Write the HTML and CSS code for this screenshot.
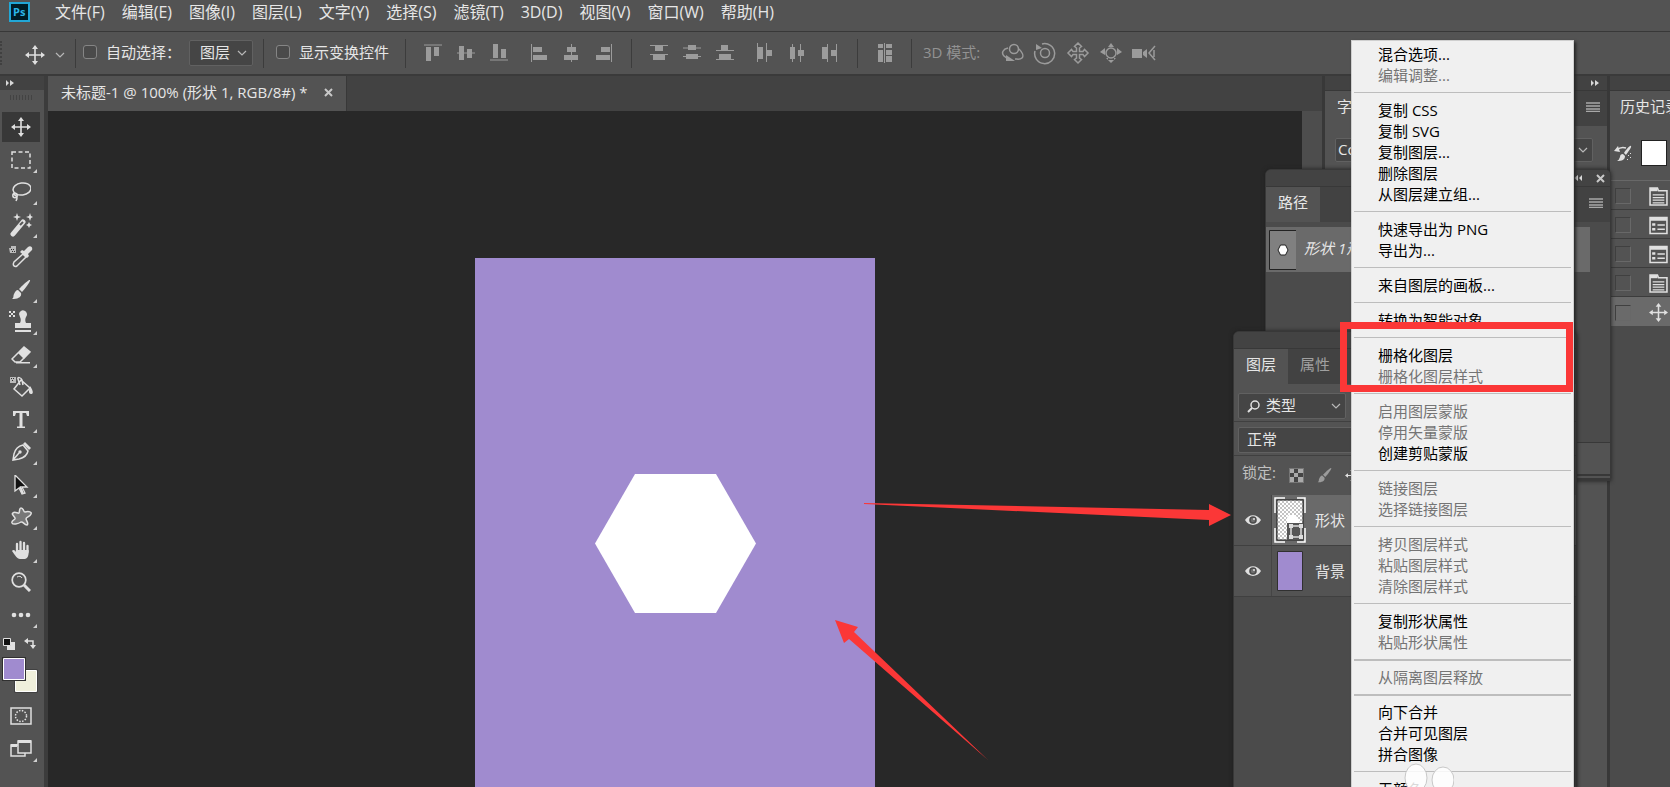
FILE: index.html
```html
<!DOCTYPE html>
<html lang="zh-CN">
<head>
<meta charset="utf-8">
<title>未标题-1</title>
<link rel="stylesheet" href="styles.css">
</head>
<body>
<svg class="defs" aria-hidden="true">
  <defs>
    <symbol id="i-move" viewBox="0 0 20 20"><path d="M10 3v14M3 10h14" stroke="currentColor" stroke-width="1.6"/><path d="M10 0l3 4H7zM10 20l3-4H7zM0 10l4-3v6zM20 10l-4-3v6z" fill="currentColor"/></symbol>
    <symbol id="i-chev" viewBox="0 0 10 6"><path d="M1 1l4 4 4-4" fill="none" stroke="currentColor" stroke-width="1.2"/></symbol>
    <symbol id="i-brush" viewBox="0 0 20 20"><path d="M19 0c1 1-5 9-8 12l-3-3C11 6 18-1 19 0zM7 10l3 3c1 4-3 6-9 6 2-1 1-3 2-5s2-4 4-4z" fill="currentColor"/></symbol>
    <symbol id="i-lines" viewBox="0 0 14 10"><path d="M0 1h14M0 4h14M0 7h14M0 9.500h14" stroke="currentColor" stroke-width="1.300"/></symbol>
    <symbol id="i-dbl" viewBox="0 0 8 6"><path d="M0 0l3 3-3 3zM4 0l4 3-4 3z" fill="currentColor"/></symbol>
    <symbol id="i-eye" viewBox="0 0 16 10"><path d="M0 5c4-6.500 12-6.500 16 0-4 6.500-12 6.500-16 0z" fill="#e0e0e0"/><circle cx="8" cy="5" r="3.800" fill="#4b4b4b"/><circle cx="8" cy="5" r="2.200" fill="#6f6f6f"/><circle cx="9" cy="4" r="1" fill="#e0e0e0"/></symbol>
    <symbol id="i-page" viewBox="0 0 18 18"><path d="M1 17V1h7l1 2.500h8V17z" fill="none" stroke="currentColor" stroke-width="1.500"/><path d="M1 1h7v3H1z" fill="currentColor"/><path d="M3.500 7.500h11M3.500 10h11M3.500 12.500h11M3.500 15h11" stroke="currentColor" stroke-width="1.200"/></symbol>
    <symbol id="i-list" viewBox="0 0 18 18"><path d="M1 1.500h16v15H1z" fill="none" stroke="currentColor" stroke-width="1.500"/><path d="M1 1.500h16v3H1z" fill="currentColor"/><path d="M3 8h3M3 12.500h3" stroke="currentColor" stroke-width="2.500"/><path d="M8 8.500h7M8 12.500h7" stroke="currentColor" stroke-width="1.500"/></symbol>
    <pattern id="checker" width="4" height="4" patternUnits="userSpaceOnUse"><path d="M0 0h4v4H0z" fill="#fff"/><path d="M0 0h2v2H0zM2 2h2v2H2z" fill="#c4c4c4"/></pattern>
  </defs>
</svg>

<div class="app">
  <header class="menubar">
    <svg class="logo" viewBox="0 0 21 20" role="img" aria-label="Ps"><rect x="1" y="1" width="19" height="18" fill="#001d26" stroke="#22a7d6" stroke-width="2"/><text x="4" y="14" class="logo-text">Ps</text></svg>
    <nav class="menus">
      <button>文件(F)</button><button>编辑(E)</button><button>图像(I)</button><button>图层(L)</button><button>文字(Y)</button><button>选择(S)</button><button>滤镜(T)</button><button>3D(D)</button><button>视图(V)</button><button>窗口(W)</button><button>帮助(H)</button>
    </nav>
  </header>

  <div class="options">
    <span class="grip"></span>
    <button class="current-tool" aria-label="移动工具"><svg class="ic20"><use href="#i-move"/></svg><svg class="chev"><use href="#i-chev"/></svg></button>
    <div class="opt auto">
      <label class="check"><input type="checkbox">自动选择：</label>
      <div class="select"><select aria-label="自动选择"><option>图层</option></select><svg class="chev"><use href="#i-chev"/></svg></div>
    </div>
    <div class="opt transform"><label class="check"><input type="checkbox">显示变换控件</label></div>
    <div class="opt icons">
      <div class="set">
        <button aria-label="顶对齐"><svg class="ic20"><path d="M1 2h18" stroke="#9b9b9b"/><path d="M3 4h5v14H3zM11 4h5v9h-5z"/></svg></button>
        <button aria-label="垂直居中对齐"><svg class="ic20"><path d="M1 10h18" stroke="#9b9b9b"/><path d="M3 3h5v14H3zM11 6h5v9h-5z"/></svg></button>
        <button aria-label="底对齐"><svg class="ic20"><path d="M1 17h18" stroke="#9b9b9b"/><path d="M4 1h5v14H4zM12 6h5v9h-5z"/></svg></button>
      </div>
      <div class="set">
        <button aria-label="左对齐"><svg class="ic20"><path d="M3.500 1v18" stroke="#9b9b9b"/><path d="M5 4h9v5H5zM5 12h14v5H5z"/></svg></button>
        <button aria-label="水平居中对齐"><svg class="ic20"><path d="M10.500 1v18" stroke="#9b9b9b"/><path d="M6 4h9v5H6zM3 12h14v5H3z"/></svg></button>
        <button aria-label="右对齐"><svg class="ic20"><path d="M17.500 1v18" stroke="#9b9b9b"/><path d="M7 4h9v5H7zM2 12h14v5H2z"/></svg></button>
      </div>
    </div>
    <div class="opt icons">
      <div class="set">
        <button aria-label="按顶分布"><svg class="ic20"><path d="M1 2.500h18M1 11.500h18" stroke="#9b9b9b"/><path d="M6 3h8v5H6zM4 12h12v5H4z"/></svg></button>
        <button aria-label="垂直居中分布"><svg class="ic20"><path d="M1 5h18M1 13.500h18" stroke="#9b9b9b"/><path d="M6 2h8v5H6zM4 11h12v5H4z"/></svg></button>
        <button aria-label="按底分布"><svg class="ic20"><path d="M1 7.500h18M1 16.500h18" stroke="#9b9b9b"/><path d="M6 2h7v5H6zM4 11h12v5H4z"/></svg></button>
      </div>
      <div class="set">
        <button aria-label="按左分布"><svg class="ic20"><path d="M3.500 0v19M12.500 0v19" stroke="#9b9b9b"/><path d="M4 4h5v12H4zM13 7h5v6h-5z"/></svg></button>
        <button aria-label="水平居中分布"><svg class="ic20"><path d="M5.500 1v18M13.500 1v18" stroke="#9b9b9b"/><path d="M3 4h5v12H3zM11 7h6v6h-6z"/></svg></button>
        <button aria-label="按右分布"><svg class="ic20"><path d="M7.500 1v18M16.500 1v18" stroke="#9b9b9b"/><path d="M2 4h5v12H2zM11 7h5v6h-5z"/></svg></button>
      </div>
    </div>
    <div class="opt single"><button aria-label="自动对齐图层"><svg class="ic20"><path d="M3 1h5v4H3zM11 1h6v4h-6zM3 7h5v12H3zM11 7h6v5h-6zM11 13h6v6h-6z"/><path d="M9.500 0v20" stroke="#9b9b9b"/></svg></button></div>
    <div class="opt three-d"><span class="mode">3D 模式:</span>
      <div class="set">
        <button aria-label="旋转"><svg class="ic24"><g fill="none" stroke="#9b9b9b" stroke-width="1.500"><circle cx="14" cy="8" r="4.500"/><path d="M8 7C3 8 1 12 4 15c2 2 4 3 6 3M19 8c3 3 5 7 3 9-2 2-5 1-7 1"/></g><path d="M6 14v6h9z"/></svg></button>
        <button aria-label="滚动"><svg class="ic24"><g fill="none" stroke="#9b9b9b" stroke-width="1.500"><circle cx="12" cy="12" r="4.500"/><path d="M9 3a10 10 0 1 1-7 7"/></g><path d="M3 9l6-2-6-4z"/></svg></button>
        <button aria-label="拖动"><svg class="ic24"><path d="M12 2l3.500 3.500-2 1.500v3.500H17l1.500-2L22 12l-3.500 3.500-1.500-2h-3.500V17l2 1.500L12 22l-3.500-3.500 2-1.500v-3.500H7l-1.500 2L2 12l3.500-3.500 1.500 2h3.500V7l-2-1.500z" fill="none" stroke="#9b9b9b" stroke-width="1.500"/></svg></button>
        <button aria-label="滑动"><svg class="ic24"><circle cx="12" cy="12" r="5" fill="none" stroke="#9b9b9b" stroke-width="1.500"/><path d="M12 2l3 4h-6zM12 22l5-5H7zM1 11l5-4v7zM23 11l-5-4v7zM9 17h6v2H9z"/></svg></button>
        <button aria-label="变焦"><svg class="ic24"><path d="M0 8h10v9H0zM11 11l4-3v9l-4-3z"/><path d="M23 5l-6 7 6 7M22 9v7" fill="none" stroke="#9b9b9b" stroke-width="1.500"/></svg></button>
      </div>
    </div>
  </div>

  <main class="workspace">
    <aside class="tools">
      <div class="strip"><svg class="dbl"><use href="#i-dbl"/></svg></div>
      <div class="tool-grip"></div>
      <div class="tool-list">
        <button class="on" aria-label="移动"><svg class="ic20"><use href="#i-move"/></svg></button>
        <button class="more" aria-label="选框"><svg class="ic20"><rect x="1" y="2" width="18" height="16" fill="none" stroke="#e0e0e0" stroke-width="1.500" stroke-dasharray="4 2.500"/></svg></button>
        <button class="more" aria-label="套索"><svg class="ic20"><g fill="none" stroke="#e0e0e0" stroke-width="1.500"><ellipse cx="11" cy="7" rx="9" ry="6" transform="rotate(-8 11 7)"/><circle cx="4" cy="13.500" r="2.200"/><path d="M2 12c4 2 5 3 3 7"/></g></svg></button>
        <button class="more" aria-label="魔棒"><svg class="ic24"><path d="M4 21L14 9" stroke="#e0e0e0" stroke-width="5" stroke-linecap="round"/><path d="M11 12l3-3" stroke="#555" stroke-width="2"/><path d="M8 0l1 3 3 1-3 1-1 3-1-3-3-1 3-1zM21 0l1 3 2 1-2 1-1 3-1-3-3-1 3-1zM20 9l1 2 2 1-2 1-1 2-1-2-2-1 2-1z" fill="#e0e0e0"/></svg></button>
        <button aria-label="吸管"><svg class="ic24"><path d="M0 3h2V1h5v7H1z" fill="#bbb"/><path d="M2 4h1v1H2zM4 4h1v1H4zM3 6h1v1H3zM5 6h1v1H5z" fill="#333"/><path d="M14 9l3 3-9 9c-2 1-5 0-3-4z" fill="none" stroke="#e0e0e0" stroke-width="1.500"/><path d="M11 7l2-2 2 1 4-4c3-2 5 1 4 3l-4 4 1 2-2 2z" fill="#e0e0e0"/></svg></button>
        <button class="more" aria-label="画笔"><svg class="ic20"><use href="#i-brush"/></svg></button>
        <button class="more" aria-label="图章"><svg class="ic24"><path d="M0 1h2v2H0zM4 1h2v2H4zM2 3h2v2H2zM0 5h2v2H0zM4 5h2v2H4zM10 4a4 4 0 1 1 7 3c-1 2-1 4 0 6h5v5H6v-5h5c1-2 1-4 0-6zM6 20h16v2H6z" fill="#e0e0e0"/></svg></button>
        <button class="more" aria-label="橡皮擦"><svg class="ic20"><path d="M1 14L13 2l6 5-10 10H4z" fill="none" stroke="#e0e0e0" stroke-width="1.500"/><path d="M7 8l6-6 6 5-6 7zM5 17h14v1.500H5z" fill="#e0e0e0"/></svg></button>
        <button aria-label="油漆桶"><svg class="ic24"><path d="M1 2h6v6H1z" fill="#bbb"/><path d="M2 3h1v1H2zM4 3h1v1H4zM3 5h1v1H3z" fill="#333"/><path d="M12 5l9 8-8 8-8-7zM11 10L9 4c-1-2 3-2 4 1l1 5" fill="none" stroke="#e0e0e0" stroke-width="1.500"/><path d="M21 11c3 4 4 8 1 8s-2-4-1-8z" fill="#e0e0e0"/></svg></button>
        <button class="more" aria-label="文字"><svg class="ic20"><path d="M2 1h16v5h-2l-1-3h-3.500v13.500H14V18H6v-1.500h2.500V3H5L4 6H2z" fill="#e0e0e0"/></svg></button>
        <button class="more" aria-label="钢笔"><svg class="ic20"><path d="M12 3l5 6c-1 5-5 7-9 8l-6 1 1-6c1-4 4-8 9-9zM2 18l6-7" fill="none" stroke="#e0e0e0" stroke-width="1.500"/><circle cx="9" cy="10" r="1.700" fill="#e0e0e0"/><path d="M12 2l2-2 6 6-2 2z" fill="#e0e0e0"/></svg></button>
        <button class="more" aria-label="路径选择"><svg class="ic20"><path d="M4 0v16l4-3 3 6 3-1-3-6h5z" fill="#111" stroke="#e0e0e0" stroke-width="1.300"/><path d="M8 12l3 7 2-1-3-7z" fill="#e0e0e0"/></svg></button>
        <button class="more" aria-label="形状"><svg class="ic24"><path d="M12 3c3 0 2 4 4 4 4-1 7 0 6 2-1 3-5 3-5 5 1 3 3 5 1 6-3 0-4-4-6-3-3 2-8 3-9 1-1-3 4-3 3-5C5 11 2 9 4 8c2-2 5 1 6 0 1-2 0-5 2-5z" fill="#777" stroke="#e0e0e0" stroke-width="1.500"/></svg></button>
        <button class="more" aria-label="抓手"><svg class="ic20"><path d="M6 12V4M9.500 11V2M13 11V3M16.500 12V6" stroke="#e0e0e0" stroke-width="2.300" stroke-linecap="round"/><path d="M5 10h12.600c.5 5-1 9-4 9H9c-3 0-5-4-8-8 1-2 3-1 4 1z" fill="#e0e0e0"/></svg></button>
        <button aria-label="缩放"><svg class="ic20"><circle cx="8" cy="8" r="6.800" fill="none" stroke="#e0e0e0" stroke-width="1.700"/><path d="M6 5c2-1 4-1 5 1" fill="none" stroke="#e0e0e0"/><path d="M13 13l6 6" stroke="#e0e0e0" stroke-width="3"/></svg></button>
        <button class="more" aria-label="更多"><svg class="ic20"><circle cx="3" cy="10" r="2.300" fill="#e0e0e0"/><circle cx="10" cy="10" r="2.300" fill="#e0e0e0"/><circle cx="17" cy="10" r="2.300" fill="#e0e0e0"/></svg></button>
      </div>
      <svg class="colors" viewBox="0 0 40 58" role="img" aria-label="前景色和背景色">
        <path d="M7 6h8v8H7z" fill="#e0e0e0"/><path d="M3.500 2.500h7v7h-7z" fill="#111" stroke="#e0e0e0"/>
        <path d="M27 5h6v6" fill="none" stroke="#e0e0e0" stroke-width="1.500"/><path d="M24 5l4-3v6zM33 13l-3-4h6z" fill="#e0e0e0"/>
        <path d="M14.500 33.500h23v23h-23z" fill="#303030"/><path d="M15.500 34.500h21v21h-21z" fill="#f0f0dc" stroke="#fff"/>
        <path d="M2 21h24v24H2z" fill="#303030"/><path d="M3.500 22.500h21v21h-21z" fill="#a08bcf" stroke="#fff"/>
      </svg>
      <button aria-label="快速蒙版"><svg class="ic24"><path d="M2 4h20v16H2z" fill="none" stroke="#e0e0e0" stroke-width="1.500"/><circle cx="12" cy="12" r="5.500" fill="none" stroke="#e0e0e0" stroke-width="1.500" stroke-dasharray="1.500 1.400"/></svg></button>
      <button class="more" aria-label="屏幕模式"><svg class="ic24"><path d="M9 8H2v11h14v-3M9 4h13v12H9z" fill="none" stroke="#e0e0e0" stroke-width="1.500"/><path d="M9 3h13v3H9zM2 7h6v3H2z" fill="#e0e0e0"/></svg></button>
    </aside>

    <section class="document">
      <div class="doc-tabs"><div class="doc-tab"><span>未标题-1 @ 100% (形状 1, RGB/8#) *</span><button aria-label="关闭"><svg class="x"><path d="M1 1l7 7M8 1L1 8"/></svg></button></div></div>
      <div class="stage">
        <div class="canvas"><svg class="artboard" viewBox="0 0 400 529" preserveAspectRatio="xMinYMin slice"><path d="M120 285.500L160 216h81l40 69.500-40 69.500h-81z" fill="#fff"/></svg></div>
        <div class="scrollbar"></div>
      </div>
    </section>

    <aside class="dock char">
      <div class="strip end"><svg class="dbl"><use href="#i-dbl"/></svg></div>
      <div class="tabs"><span class="tab">字符</span><svg class="lines"><use href="#i-lines"/></svg></div>
      <div class="char-body"><div class="select"><select aria-label="字体"><option>Courier</option></select><svg class="chev"><use href="#i-chev"/></svg></div></div>
    </aside>
    <aside class="dock history">
      <div class="strip"></div>
      <div class="tabs"><span class="tab">历史记录</span></div>
      <div class="snapshot"><svg class="hist-brush" viewBox="0 0 18 18"><path d="M17 2c1 1-3 6-5 9l-2-2c2-3 6-8 7-7zM9 10l2 2c0 4-3 5-8 5 2-1 2-2 3-4 0-2 1-3 3-3z" fill="currentColor"/><path d="M3 6c3-3 6-3 9-2" fill="none" stroke="currentColor" stroke-width="1.500"/><path d="M0 7l4-5 2 6zM14 11h1v1h-1zM16 9h1v1h-1zM16 13h1v1h-1zM13 15h1v1h-1z" fill="currentColor"/></svg><span class="snap-thumb"></span></div>
      <ul class="steps">
        <li><span class="box"></span><svg><use href="#i-page"/></svg></li>
        <li><span class="box"></span><svg><use href="#i-list"/></svg></li>
        <li><span class="box"></span><svg><use href="#i-list"/></svg></li>
        <li><span class="box"></span><svg><use href="#i-page"/></svg></li>
        <li class="on"><span class="box"></span><svg><use href="#i-move"/></svg></li>
      </ul>
    </aside>
  </main>

  <section class="float paths">
    <div class="titlebar"><svg class="dbl flip"><use href="#i-dbl"/></svg><button aria-label="关闭"><svg class="x"><path d="M1 1l7 7M8 1L1 8"/></svg></button></div>
    <div class="tabs"><span class="tab">路径</span><svg class="lines"><use href="#i-lines"/></svg></div>
    <div class="path-row"><svg class="path-thumb" viewBox="0 0 27 40"><path d="M.5.5h27v39H.5z" fill="#808080" stroke="#222"/><path d="M9 20l2.500-5h5l2.500 5-2.500 5h-5z" fill="#fff" stroke="#222"/></svg><em>形状 1形</em></div>
    <div class="path-foot"></div>
  </section>

  <section class="float layers">
    <div class="titlebar"></div>
    <div class="tabs"><span class="tab">图层</span><span class="tab off">属性</span></div>
    <div class="filter"><div class="select"><svg class="mag" viewBox="0 0 13 13"><circle cx="8" cy="5" r="4" fill="none" stroke="#e0e0e0" stroke-width="1.500"/><path d="M5 8l-4 4" stroke="#e0e0e0" stroke-width="2"/></svg><select aria-label="类型"><option>类型</option></select><svg class="chev"><use href="#i-chev"/></svg></div></div>
    <div class="blend"><div class="select"><select aria-label="混合模式"><option>正常</option></select></div></div>
    <div class="lock"><span class="lock-label">锁定:</span>
      <svg class="lock-ic" viewBox="0 0 15 15"><path d="M0 0h15v15H0z" fill="#777"/><path d="M1 1h4v4H1zM9 1h5v4H9zM5 5h4v4H5zM1 9h4v5H1zM9 9h5v5H9z" fill="#aaa"/><path d="M5 1h4v4H5zM1 5h4v4H1zM9 5h5v4H9zM5 9h4v5H5z" fill="#444"/></svg>
      <svg class="lock-ic"><use href="#i-brush"/></svg><svg class="lock-ic light"><use href="#i-move"/></svg></div>
    <ul class="layer-list">
      <li class="on"><button class="eye" aria-label="可见"><svg><use href="#i-eye"/></svg></button><div class="layer"><svg class="thumb" viewBox="0 0 32 46"><path d="M3 3h26v40H3z" fill="url(#checker)" stroke="#222"/><path d="M13 21l2-3h6l3 3 2 5H13z" fill="#fff"/><path d="M13 26h16v17H13z" fill="#555"/><path d="M17 29h10v11H17z" fill="none" stroke="#ddd" stroke-width="1.500"/><path d="M15 27h4v4h-4zM25 27h4v4h-4zM15 38h4v4h-4zM25 38h4v4h-4z" fill="#ddd"/><path d="M1 16V1h10M23 1h8v15M1 31v14h10M23 45h8V31" fill="none" stroke="#fff" stroke-width="1.500"/></svg><span>形状</span></div></li>
      <li><button class="eye" aria-label="可见"><svg><use href="#i-eye"/></svg></button><div class="layer"><svg class="thumb" viewBox="0 0 32 46"><path d="M3.500 3.500h25v39h-25z" fill="#a08bcf" stroke="#303030"/></svg><span>背景</span></div></li>
    </ul>
  </section>

  <ul class="context">
    <li><button>混合选项...</button></li>
    <li><button disabled>编辑调整...</button></li>
    <li class="sep"></li>
    <li><button>复制 CSS</button></li>
    <li><button>复制 SVG</button></li>
    <li><button>复制图层...</button></li>
    <li><button>删除图层</button></li>
    <li><button>从图层建立组...</button></li>
    <li class="sep"></li>
    <li><button>快速导出为 PNG</button></li>
    <li><button>导出为...</button></li>
    <li class="sep"></li>
    <li><button>来自图层的画板...</button></li>
    <li class="sep"></li>
    <li><button>转换为智能对象</button></li>
    <li class="sep"></li>
    <li><button>栅格化图层</button></li>
    <li><button disabled>栅格化图层样式</button></li>
    <li class="sep"></li>
    <li><button disabled>启用图层蒙版</button></li>
    <li><button disabled>停用矢量蒙版</button></li>
    <li><button>创建剪贴蒙版</button></li>
    <li class="sep"></li>
    <li><button disabled>链接图层</button></li>
    <li><button disabled>选择链接图层</button></li>
    <li class="sep"></li>
    <li><button disabled>拷贝图层样式</button></li>
    <li><button disabled>粘贴图层样式</button></li>
    <li><button disabled>清除图层样式</button></li>
    <li class="sep"></li>
    <li><button>复制形状属性</button></li>
    <li><button disabled>粘贴形状属性</button></li>
    <li class="sep thick"></li>
    <li><button disabled>从隔离图层释放</button></li>
    <li class="sep thick"></li>
    <li><button>向下合并</button></li>
    <li><button>合并可见图层</button></li>
    <li><button>拼合图像</button></li>
    <li class="sep"></li>
    <li><button>无颜色</button></li>
  </ul>

  <div class="highlight"></div>
  <svg class="arrows" viewBox="0 0 400 270" aria-hidden="true"><path d="M24 13l345 7v-6l22 11-22 11v-6L24 14zM148 270L9 149l-5 4-9-23 23 7-4 5z" fill="#fb3737"/></svg>
  <svg class="ears" viewBox="0 0 56 24" aria-hidden="true"><ellipse cx="18" cy="15" rx="11" ry="14" fill="#fff" fill-opacity=".85" stroke="#c8c8c8"/><ellipse cx="45" cy="17" rx="11" ry="13" fill="#fff" fill-opacity=".85" stroke="#c8c8c8"/></svg>
</div>
</body>
</html>
```
FILE: styles.css
```css
* { box-sizing: border-box; }

body {
  margin: 0;
  overflow: hidden;
  background: #535353;
  color: #e6e6e6;
  font: 15px/20px "Open Sans", "Noto Sans CJK SC", sans-serif;
}

ul { margin: 0; padding: 0; list-style: none; }
svg { display: block; flex: none; }
button {
  padding: 0;
  border: 0;
  background: none;
  color: inherit;
  font: inherit;
  white-space: nowrap;
}
select {
  flex: 1;
  min-width: 0;
  padding: 0 0 2px;
  border: 0;
  background: none;
  color: inherit;
  font: inherit;
  appearance: none;
}

.defs { position: absolute; width: 0; height: 0; }
.app {
  position: relative;
  display: flex;
  flex-direction: column;
  height: 100vh;
  overflow: hidden;
}

.ic20 { width: 20px; height: 20px; }
.ic24 { width: 24px; height: 24px; }
.chev { width: 10px; height: 6px; color: #b8b8b8; }
.dbl { width: 8px; height: 6px; color: #d8d8d8; }
.flip { transform: scaleX(-1); }
.lines { width: 14px; height: 10px; color: #a8a8a8; }
.x { width: 9px; height: 9px; fill: none; stroke: #c8c8c8; stroke-width: 2; }

/* Menu bar */
.menubar {
  display: flex;
  gap: 25px;
  height: 32px;
  padding: 2px 9px;
  border-bottom: 1px solid #383838;
}
.logo { width: 21px; height: 20px; }
.logo-text { fill: #2bb5e6; font: bold 11px "Open Sans", sans-serif; }
.menus { display: flex; gap: 17px; height: 20px; font-size: 16px; }

/* Options bar */
.options {
  display: flex;
  align-items: center;
  height: 44px;
  border-bottom: 2px solid #3a3a3a;
}
.grip { width: 4px; height: 24px; margin-right: 21px; border-left: 2px dotted #404040; }
.current-tool { display: flex; align-items: center; gap: 10px; width: 50px; padding-top: 3px; color: #e0e0e0; }
.opt { display: flex; align-items: center; height: 29px; border-left: 1px solid #3c3c3c; }
.auto { gap: 8px; width: 188px; padding-left: 7px; }
.transform { width: 142px; padding-left: 12px; }
.check { display: flex; align-items: center; gap: 9px; height: 24px; padding-bottom: 3px; white-space: nowrap; }
.check input {
  width: 14px;
  height: 14px;
  margin: 0;
  border: 1px solid #858585;
  border-radius: 3px;
  background: #4a4a4a;
  appearance: none;
}
.select {
  display: flex;
  align-items: center;
  height: 26px;
  padding: 0 5px 0 10px;
  border: 1px solid #616161;
  border-radius: 2px;
  background: #454545;
}
.auto .select { width: 64px; }
.icons { gap: 19px; width: 226px; padding-left: 17px; fill: #9b9b9b; }
.set { display: flex; gap: 13px; }
.single { width: 54px; padding-left: 17px; fill: #9b9b9b; }
.three-d { gap: 20px; padding-left: 11px; color: #929292; fill: #9b9b9b; }
.three-d .set { gap: 9px; }
.mode { padding-bottom: 3px; }

/* Workspace */
.workspace { display: flex; flex: 1; min-height: 0; }
.strip { display: flex; align-items: center; height: 14px; padding: 0 6px; background: #424242; }
.end { justify-content: flex-end; padding-right: 8px; }

.tools {
  display: flex;
  flex-direction: column;
  width: 48px;
  border-right: 4px solid #3c3c3c;
}
.tool-grip { flex: none; width: 24px; height: 5px; margin: 5px 10px 12px; background: repeating-linear-gradient(90deg, #434343 0 1px, #535353 1px 3px); }
.tool-list { display: flex; flex-direction: column; justify-content: space-between; flex: none; height: 518px; }
.tools button { position: relative; display: flex; align-items: center; justify-content: center; flex: none; width: 38px; height: 30px; margin-left: 2px; color: #e0e0e0; }
.tools .on { background: #383838; }
.tools .more::after {
  content: "";
  position: absolute;
  right: 3px;
  bottom: 2px;
  border: 2px solid;
  border-color: transparent #d0d0d0 #d0d0d0 transparent;
}
.colors { width: 40px; height: 58px; margin: 6px 0 7px; }
.tools .colors ~ button { margin-bottom: 3px; }

.document { display: flex; flex: 1; flex-direction: column; min-width: 0; }
.doc-tabs { display: flex; height: 35px; background: #424242; }
.doc-tab {
  display: flex;
  align-items: center;
  gap: 16px;
  padding: 0 13px 3px;
  border-right: 1px solid #383838;
  background: #535353;
  white-space: nowrap;
}
.stage { display: flex; flex: 1; min-height: 0; }
.canvas { flex: 1; min-width: 0; padding: 147px 0 0 427px; overflow: hidden; background: #282828; }
.artboard { width: 400px; height: 100%; background: #a08bcf; }
.scrollbar { width: 20px; background: #4d4d4d; }

/* Docked panels */
.dock { display: flex; flex-direction: column; overflow: hidden; border-left: 3px solid #383838; }
.char { width: 285px; }
.history { width: 63px; background: #4b4b4b; }
.tabs { display: flex; align-items: center; flex: none; height: 36px; padding: 0 7px 3px 0; border-top: 1px solid #383838; background: #424242; white-space: nowrap; }
.tab { align-self: flex-start; flex: none; height: 35px; padding: 5px 12px; background: #535353; }
.off { background: none; color: #a0a0a0; }
.tabs .lines { margin-left: auto; }
.char-body { flex: 1; padding: 12px 14px 0 10px; background: #535353; }
.char-body .select { height: 24px; padding: 0 4px 0 2px; }
.snapshot { display: flex; align-items: center; gap: 9px; flex: none; height: 54px; padding-left: 4px; background: #535353; color: #e0e0e0; }
.hist-brush { width: 18px; height: 18px; }
.snap-thumb { flex: none; width: 26px; height: 26px; border: 1px solid #222; background: #fff; }
.history .tab { padding-left: 10px; }
.steps { border-top: 1px solid #686868; }
.steps li { display: flex; align-items: center; gap: 18px; height: 29px; padding: 2px 0 0 5px; border-bottom: 1px solid #3c3c3c; background: #535353; color: #e0e0e0; }
.steps svg { width: 19px; height: 19px; }
.steps .on { border: 0; background: #6a6a6a; }
.box { flex: none; width: 16px; height: 16px; border: 1px solid #686868; border-top-color: #404040; border-left-color: #404040; }

/* Floating panels */
.float { position: absolute; display: flex; flex-direction: column; border: 1px solid #383838; border-radius: 6px 6px 0 0; background: #4b4b4b; box-shadow: 0 0 4px #202020; overflow: hidden; }
.titlebar { display: flex; align-items: center; justify-content: flex-end; gap: 14px; flex: none; height: 16px; padding-right: 5px; background: #434343; }
.paths { top: 169px; right: 59px; width: 346px; height: 312px; }
.path-row { display: flex; align-items: center; gap: 8px; height: 45px; margin: 5px 20px 0 0; padding-left: 3px; background: #6a6a6a; white-space: nowrap; }
.path-row em { padding-bottom: 3px; }
.path-thumb { width: 27px; height: 40px; }
.path-foot { height: 38px; margin-top: auto; border-top: 1px solid #383838; border-bottom: 6px double #383838; background: #535353; }

.layers { top: 331px; right: 93px; bottom: -4px; width: 344px; }
.layers .select { padding: 0 4px 0 8px; }
.filter, .blend, .lock { flex: none; background: #535353; }
.filter { padding: 9px 0 2px 4px; }
.filter .select { gap: 6px; width: 108px; }
.mag { width: 13px; height: 13px; }
.blend { padding: 5px 4px 2px; border-top: 1px solid #404040; border-bottom: 1px solid #404040; }
.blend select { padding-bottom: 3px; }
.lock { display: flex; align-items: center; gap: 13px; height: 39px; padding-left: 8px; color: #c0c0c0; }
.lock-label { padding-bottom: 7px; }
.lock-ic { width: 15px; height: 15px; color: #9b9b9b; }
.lock .light { color: #e0e0e0; }
.layer-list li { display: flex; height: 51px; border-bottom: 1px solid #404040; background: #535353; }
.eye { display: flex; align-items: center; justify-content: center; width: 38px; border-right: 1px solid #454545; }
.eye svg { width: 16px; height: 10px; }
.layer { display: flex; align-items: center; flex: 1; gap: 9px; padding-left: 2px; }
.on .layer { background: #6a6a6a; }
.thumb { width: 32px; height: 46px; }

/* Context menu */
.context {
  position: absolute;
  top: 40px;
  right: 96px;
  bottom: 0;
  width: 223px;
  padding: 2px;
  border: 1px solid #cfcfcf;
  border-bottom: 0;
  background: #f0f0f0;
  box-shadow: 2px 2px 3px #262626;
  color: #000;
  overflow: hidden;
}
.context button { display: block; width: 100%; height: 21px; padding-left: 24px; line-height: 20px; text-align: left; }
.context button:disabled { color: #747474; }
.sep { height: 1px; margin: 7px 0 6px; background: #bdbdbd; }
.thick { height: 2px; margin-bottom: 5px; }

/* Annotations */
.highlight { position: absolute; top: 322px; right: 97px; width: 233px; height: 70px; border: 7px solid #fb3737; }
.arrows { position: absolute; top: 490px; left: 840px; width: 400px; height: 270px; overflow: visible; }
.ears { position: absolute; right: 216px; bottom: 0; width: 56px; height: 24px; }
```
